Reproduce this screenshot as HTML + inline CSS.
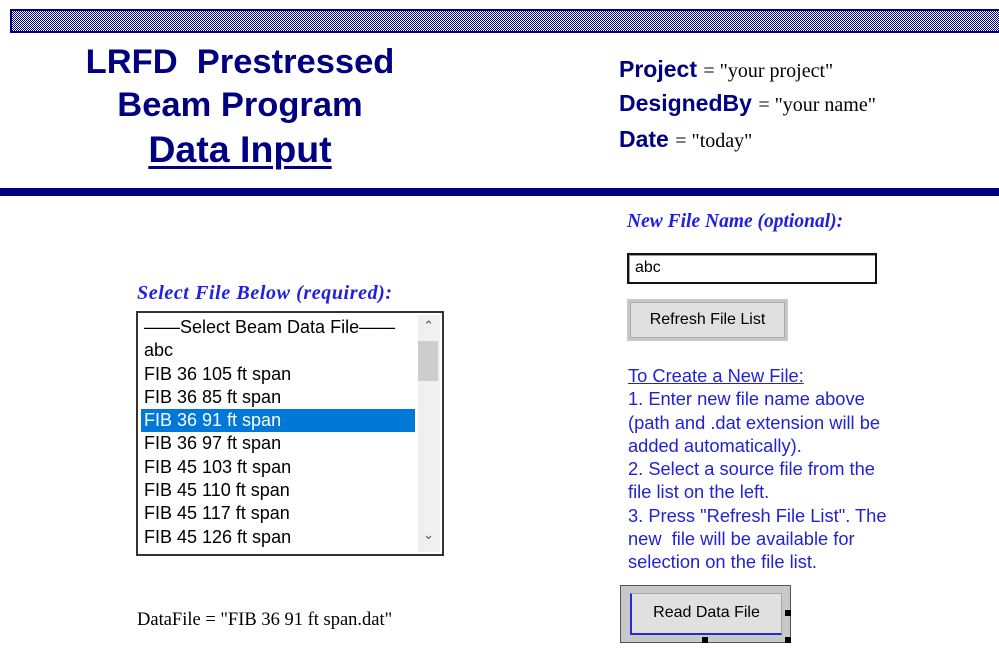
<!DOCTYPE html>
<html><head><style>
body{margin:0;width:999px;height:651px;background:#fff;position:relative;overflow:hidden;font-family:"Liberation Sans",sans-serif}
.a{position:absolute;white-space:nowrap}
.bar{position:absolute;left:10px;top:9px;width:989px;height:24px;box-sizing:border-box;border:2px solid #000080;border-right:none;background:repeating-conic-gradient(#000080 0 25%,#fff 0 50%) 0 0/2px 2px}
.t{color:#000080;font-weight:bold;font-size:34.5px;left:40px;width:400px;text-align:center}
.k{color:#000080;font-weight:bold;font-size:23px;left:619px}
.k span{font-family:"Liberation Serif",serif;font-weight:normal;font-size:20px;color:#000}
.bl{color:#2222d4;font-size:18.3px;left:628px;line-height:23.3px}
.lab{color:#2020e0;font-family:"Liberation Serif",serif;font-weight:bold;font-style:italic;font-size:19.5px}
.lb{position:absolute;left:136px;top:311px;width:308px;height:245px;box-sizing:border-box;border:2px solid #333;background:#fff}
.it{position:absolute;left:6px;font-size:18px;color:#000;line-height:23.3px}
</style></head><body>
<div class="bar"></div>
<div class="a t" style="top:43px">LRFD&nbsp; Prestressed</div>
<div class="a t" style="top:86px">Beam Program</div>
<div class="a t" style="top:128px;text-decoration:underline;text-decoration-thickness:3px;text-underline-offset:4px;font-size:37.5px">Data Input</div>
<div class="a k" style="top:56px">Project <span>= "your project"</span></div>
<div class="a k" style="top:90px">DesignedBy <span>= "your name"</span></div>
<div class="a k" style="top:126px">Date <span>= "today"</span></div>
<div style="position:absolute;left:0;top:188px;width:999px;height:8px;background:#000080"></div>
<div class="a lab" style="left:627px;top:211px">New File Name (optional):</div>
<div style="position:absolute;left:627px;top:253px;width:250px;height:31px;box-sizing:border-box;border:2px solid #111;box-shadow:inset 1px 1px 0 #999;background:#fff"></div>
<div class="a" style="left:635px;top:259px;font-size:16px">abc</div>
<div style="position:absolute;left:627px;top:299px;width:161px;height:42px;box-sizing:border-box;background:#c8c8c8;padding:3px"><div style="width:100%;height:100%;background:#e0e0e0;border:1px solid #aaa;box-sizing:border-box;font-size:16px;text-align:center;line-height:34px">Refresh File List</div></div>
<div class="a bl" style="top:364px"><u>To Create a New File:</u><br>1. Enter new file name above<br>(path and .dat extension will be<br>added automatically).<br>2. Select a source file from the<br>file list on the left.<br>3. Press "Refresh File List". The<br>new&nbsp; file will be available for<br>selection on the file list.</div>
<div class="a lab" style="left:137px;top:282px;font-size:20px;letter-spacing:0.6px">Select File Below (required):</div>
<div class="lb">
<div style="position:absolute;left:3px;top:96px;width:274px;height:23px;background:#0078d7"></div>
<div class="it" style="top:3px">——Select Beam Data File——<br>abc<br>FIB 36 105 ft span<br>FIB 36 85 ft span<br><span style="color:#fff">FIB 36 91 ft span</span><br>FIB 36 97 ft span<br>FIB 45 103 ft span<br>FIB 45 110 ft span<br>FIB 45 117 ft span<br>FIB 45 126 ft span</div>
<div style="position:absolute;right:2px;top:2px;width:22px;height:237px;background:#f0f0f0"></div>
<div style="position:absolute;right:4px;top:28px;width:20px;height:40px;background:#cdcdcd"></div>
<div class="a" style="right:8px;top:5px;font-size:13px;color:#555">&#8963;</div>
<div class="a" style="right:8px;top:214px;font-size:13px;color:#555">&#8964;</div>
</div>
<div class="a" style="left:137px;top:610px;font-family:'Liberation Serif',serif;font-size:18.5px">DataFile = "FIB 36 91 ft span.dat"</div>
<div style="position:absolute;left:620px;top:585px;width:171px;height:58px;box-sizing:border-box;border:1px solid #555;background:#c8c8c8"></div>
<div style="position:absolute;left:630px;top:593px;width:152px;height:42px;box-sizing:border-box;background:#e0e0e0;border:1px solid #aaa;border-left:2px solid #2a2ad8;border-bottom:2px solid #2a2ad8;font-size:16px;text-align:center;line-height:38px">Read Data File</div>
<div style="position:absolute;left:785px;top:610px;width:6px;height:6px;background:#000"></div>
<div style="position:absolute;left:702px;top:637px;width:6px;height:6px;background:#000"></div>
<div style="position:absolute;left:785px;top:637px;width:6px;height:6px;background:#000"></div>
</body></html>
